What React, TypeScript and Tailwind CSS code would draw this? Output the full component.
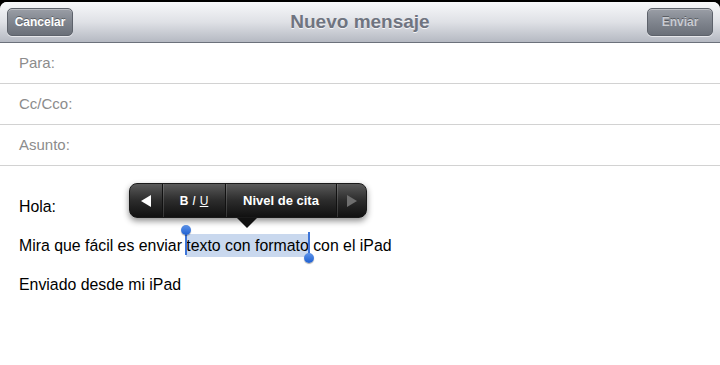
import { ReactNode } from 'react'

function HeaderButton({ children, disabled }: { children: ReactNode; disabled?: boolean }) {
  return (
    <button
      className={`h-[28px] w-[66px] rounded-[5px] border border-[#5d626b] bg-gradient-to-b from-[#9a9ea6] via-[#80858e] to-[#6b7079] text-[12px] font-bold shadow-[inset_0_1px_0_rgba(255,255,255,0.35),0_1px_0_rgba(255,255,255,0.6)] [text-shadow:0_-1px_0_rgba(0,0,0,0.35)] ${
        disabled ? 'text-[#c8cbd1]' : 'text-white'
      }`}
    >
      {children}
    </button>
  )
}

function FieldRow({ label }: { label: string }) {
  return (
    <div className="flex h-[41px] items-center border-b border-[#d2d2d2] pl-[19px] text-[15px] text-[#8c8c8c]">
      {label}
    </div>
  )
}

function Handle({ className }: { className: string }) {
  return (
    <span
      className={`absolute h-[10px] w-[10px] rounded-full bg-gradient-to-b from-[#5d94ea] to-[#1d5fd0] shadow-[0_1px_1px_rgba(0,0,0,0.35)] ${className}`}
    />
  )
}

function Popover() {
  return (
    <div className="absolute left-[129px] top-[183px] z-10">
      <div className="flex h-[35px] w-[238px] items-stretch overflow-hidden rounded-[8px] border border-[#1a1a1a] bg-gradient-to-b from-[#5a5a5a] via-[#2c2c2c] to-[#111111] text-[13px] font-bold text-white shadow-[0_3px_6px_rgba(0,0,0,0.45)]">
        <div className="flex w-[33px] items-center justify-center border-r border-r-[#111] shadow-[1px_0_0_rgba(255,255,255,0.15)]">
          <svg width="10" height="12" viewBox="0 0 10 12">
            <path d="M10 0 L0 6 L10 12 Z" fill="#fff" />
          </svg>
        </div>
        <div className="flex w-[63px] items-center justify-center gap-[4px] border-r border-r-[#111] shadow-[1px_0_0_rgba(255,255,255,0.15)] text-[12px]">
          <span className="font-bold">B</span>
          <span className="italic font-normal">I</span>
          <span className="underline font-normal">U</span>
        </div>
        <div className="flex w-[111px] items-center justify-center border-r border-r-[#111] shadow-[1px_0_0_rgba(255,255,255,0.15)]">
          Nivel de cita
        </div>
        <div className="flex flex-1 items-center justify-center">
          <svg width="10" height="12" viewBox="0 0 10 12">
            <path d="M0 0 L10 6 L0 12 Z" fill="#6e6e6e" />
          </svg>
        </div>
      </div>
      <div className="ml-[108px] h-0 w-0 border-x-[10px] border-t-[10px] border-x-transparent border-t-[#111]" />
    </div>
  )
}

export default function App() {
  return (
    <div
      className="relative h-[365px] w-[720px] overflow-hidden bg-black pt-[2px]"
      style={{ fontFamily: '"Liberation Sans", Arial, sans-serif' }}
    >
      <div className="h-full overflow-hidden rounded-t-[7px] bg-white">
        {/* Header */}
        <div className="flex h-[41px] items-center justify-between border-b border-[#6c717b] bg-gradient-to-b from-[#f7f8fa] via-[#dfe1e6] to-[#b5b9c2] px-[7px]">
          <HeaderButton>Cancelar</HeaderButton>
          <div className="text-[19px] font-bold text-[#6f7480] [text-shadow:0_1px_0_rgba(255,255,255,0.8)]">
            Nuevo mensaje
          </div>
          <HeaderButton disabled>Enviar</HeaderButton>
        </div>

        {/* Fields */}
        <FieldRow label="Para:" />
        <FieldRow label="Cc/Cco:" />
        <FieldRow label="Asunto:" />

        {/* Body */}
        <div className="pl-[19px] pt-[21px] text-[15.85px] leading-[39px] text-black">
          <p>Hola:</p>
          <p>
            Mira que fácil es enviar{' '}
            <span className="relative bg-[#c9d8ee] py-[3px]">
              <span className="absolute -left-[1px] top-[-2px] h-[23px] w-[2px] bg-[#3d74d8]" />
              <Handle className="-left-[5px] -top-[9px]" />
              texto con formato
              <span className="absolute -right-[1px] top-[-2px] h-[23px] w-[2px] bg-[#3d74d8]" />
              <Handle className="-right-[5px] top-[19px]" />
            </span>{' '}
            con el iPad
          </p>
          <p>Enviado desde mi iPad</p>
        </div>
      </div>

      <Popover />
    </div>
  )
}
